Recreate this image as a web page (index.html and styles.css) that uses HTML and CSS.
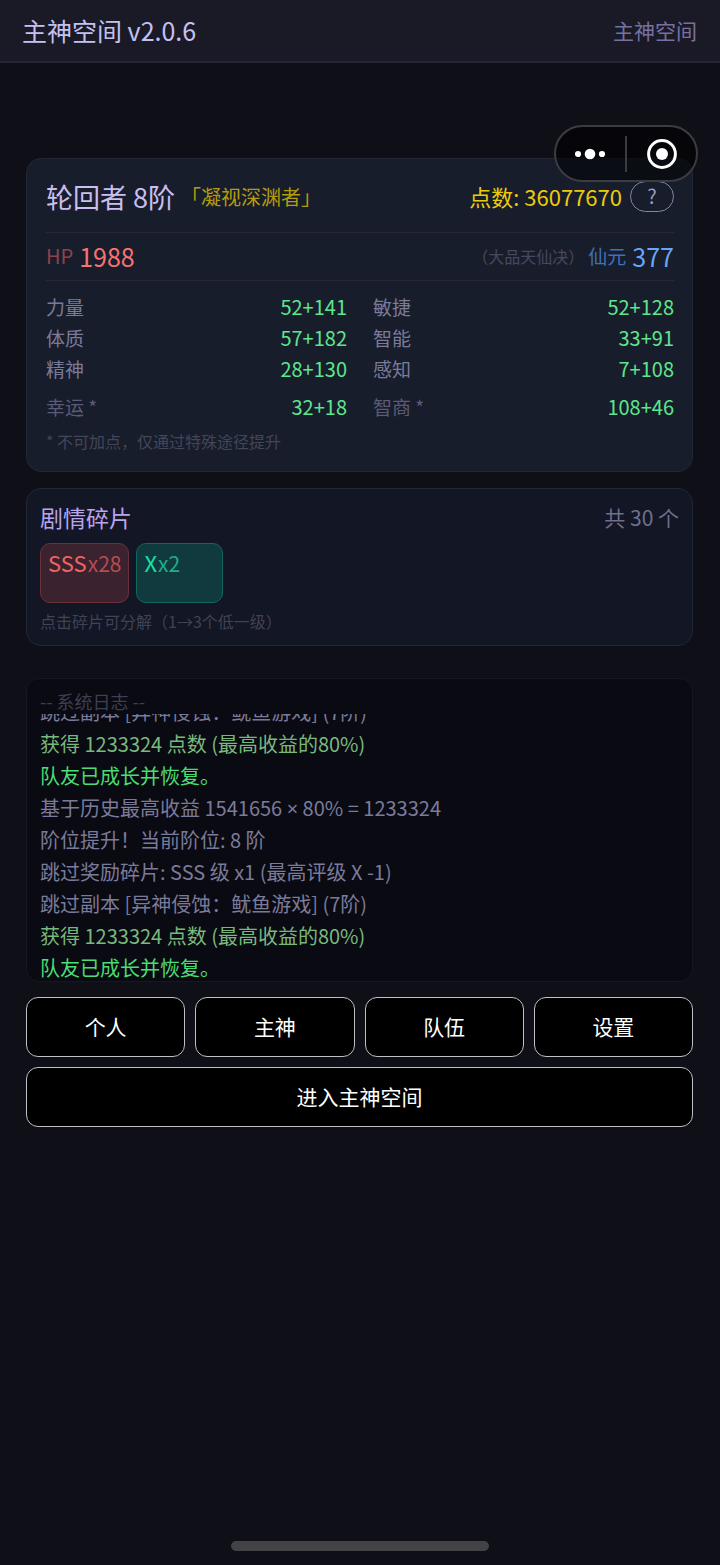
FILE: index.html
```html
<!DOCTYPE html>
<html lang="zh-CN">
<head>
<meta charset="utf-8">
<meta name="viewport" content="width=device-width, initial-scale=1">
<title>主神空间</title>
<link rel="stylesheet" href="styles.css">
</head>
<body>
<header class="topbar">
  <h1 class="topbar-title">主神空间 v2.0.6</h1>
  <span class="topbar-place">主神空间</span>
</header>

<div class="capsule">
  <button class="capsule-button" type="button" aria-label="更多">
    <svg width="32" height="12" viewBox="0 0 32 12" fill="#fff"><circle cx="3" cy="6" r="3.1"/><circle cx="15" cy="6" r="5.3"/><circle cx="27" cy="6" r="3.1"/></svg>
  </button>
  <span class="capsule-line"></span>
  <button class="capsule-button" type="button" aria-label="关闭">
    <svg width="30" height="30" viewBox="0 0 30 30"><circle cx="15" cy="15" r="13.4" fill="none" stroke="#fff" stroke-width="3"/><circle cx="15" cy="15" r="6" fill="#fff"/></svg>
  </button>
</div>

<main class="page">
  <section class="card status">
    <div class="status-head">
      <h2 class="rank">轮回者 8阶</h2>
      <span class="epithet">「凝视深渊者」</span>
      <span class="points">点数: 36077670</span>
      <button class="help" type="button">?</button>
    </div>
    <div class="vitals">
      <span class="hp-label">HP</span>
      <span class="vital-value hp-value">1988</span>
      <span class="technique">（大品天仙决）</span>
      <span class="mana-label">仙元</span>
      <span class="vital-value mana-value">377</span>
    </div>
    <dl class="stats">
      <div class="stat"><dt>力量</dt><dd>52+141</dd></div>
      <div class="stat"><dt>敏捷</dt><dd>52+128</dd></div>
      <div class="stat"><dt>体质</dt><dd>57+182</dd></div>
      <div class="stat"><dt>智能</dt><dd>33+91</dd></div>
      <div class="stat"><dt>精神</dt><dd>28+130</dd></div>
      <div class="stat"><dt>感知</dt><dd>7+108</dd></div>
    </dl>
    <dl class="stats stats-fixed">
      <div class="stat"><dt>幸运 *</dt><dd>32+18</dd></div>
      <div class="stat"><dt>智商 *</dt><dd>108+46</dd></div>
    </dl>
    <p class="note">* 不可加点，仅通过特殊途径提升</p>
  </section>

  <section class="card shards">
    <div class="shards-head">
      <h2 class="shards-title">剧情碎片</h2>
      <span class="shards-count">共 30 个</span>
    </div>
    <div class="chips">
      <button class="chip chip-sss" type="button"><span class="chip-grade">SSS</span><span class="chip-count">x28</span></button>
      <button class="chip chip-x" type="button"><span class="chip-grade">X</span><span class="chip-count">x2</span></button>
    </div>
    <p class="hint">点击碎片可分解（1→3个低一级）</p>
  </section>

  <section class="log">
    <h2 class="log-title">-- 系统日志 --</h2>
    <div class="log-view">
      <ul class="log-lines">
        <li>跳过副本 [异神侵蚀：鱿鱼游戏] (7阶)</li>
        <li class="gain">获得 1233324 点数 (最高收益的80%)</li>
        <li class="heal">队友已成长并恢复。</li>
        <li>基于历史最高收益 1541656 <span class="times">×</span> 80% = 1233324</li>
        <li>阶位提升！当前阶位: 8 阶</li>
        <li>跳过奖励碎片: SSS 级 x1 (最高评级 X -1)</li>
        <li>跳过副本 [异神侵蚀：鱿鱼游戏] (7阶)</li>
        <li class="gain">获得 1233324 点数 (最高收益的80%)</li>
        <li class="heal">队友已成长并恢复。</li>
      </ul>
    </div>
  </section>

  <nav class="actions">
    <button class="action" type="button">个人</button>
    <button class="action" type="button">主神</button>
    <button class="action" type="button">队伍</button>
    <button class="action" type="button">设置</button>
    <button class="action action-wide" type="button">进入主神空间</button>
  </nav>
</main>
<div class="home-indicator"></div>
</body>
</html>
```
FILE: styles.css
```css
* { box-sizing: border-box; }

body {
  margin: 0;
  min-height: 100vh;
  position: relative;
  background: #0f0f18;
  color: #7b7a9b;
  font-family: "Noto Sans CJK SC", sans-serif;
  font-size: 19px;
}

h1, h2, p, ul, dl, dd { margin: 0; padding: 0; font-weight: 400; }
ul { list-style: none; }
button { font: inherit; color: inherit; margin: 0; padding: 0; background: none; border: 0; cursor: pointer; }
svg { display: block; }

.topbar {
  display: flex;
  align-items: center;
  justify-content: space-between;
  height: 63px;
  padding: 0 23px 2px 22px;
  background: #1a1a27;
  border-bottom: 2px solid #262536;
}
.topbar-title { font-size: 25px; color: #c4c1f2; }
.topbar-place { font-size: 21px; color: #7671a0; }

.capsule {
  position: absolute;
  top: 125px;
  right: 22px;
  z-index: 2;
  display: flex;
  align-items: center;
  width: 144px;
  height: 57px;
  border: 2px solid #3b3b40;
  border-radius: 29px;
  background: rgba(0, 0, 0, 0.55);
}
.capsule-button { flex: 1; display: flex; justify-content: center; }
.capsule-line { width: 2px; height: 36px; background: #3b3b40; }

.page { padding: 95px 27px 0 26px; }

.card { border: 1px solid #232634; border-radius: 15px; }

.status { padding: 16px 18px 18px 19px; background: #181d2b; }
.status-head {
  display: flex;
  align-items: center;
  height: 58px;
  padding-bottom: 15px;
  border-bottom: 1px solid #252937;
}
.rank { font-size: 27px; color: #cabff0; }
.epithet { margin-left: 6px; font-size: 20px; color: #b39c10; }
.points { margin-left: auto; font-size: 22px; color: #eccb0c; }
.help {
  width: 44px;
  height: 31px;
  margin-left: 8px;
  border: 1px solid #8585a6;
  border-radius: 16px;
  font-size: 20px;
  line-height: 28px;
  color: #9d9dc0;
}

.vitals {
  display: flex;
  align-items: center;
  height: 48px;
  padding-bottom: 2px;
  border-bottom: 1px solid #252937;
}
.vital-value { margin-left: 6px; font-size: 25px; }
.hp-label { font-size: 20px; color: #8f414d; }
.hp-value { color: #f87272; }
.technique { margin-left: auto; font-size: 16px; color: #47485f; }
.mana-label { margin-left: 4px; font-size: 19px; color: #3f70b9; }
.mana-value { color: #67a6f8; }

.stats {
  display: grid;
  grid-template-columns: 1fr 1fr;
  column-gap: 26px;
  padding-top: 10px;
}
.stat { display: flex; justify-content: space-between; line-height: 31px; }
.stat dd { font-size: 20px; color: #5de68d; }
.stats-fixed { padding-top: 7px; }
.stats-fixed dt { color: #5b5b77; }
.note { margin-top: 7px; font-size: 16px; line-height: 24px; color: #434559; }

.shards { margin-top: 16px; padding: 13px 13px 12px; background: #131624; }
.shards-head { display: flex; justify-content: space-between; align-items: center; height: 30px; }
.shards-title { font-size: 23px; color: #b9a4ee; }
.shards-count { font-size: 21px; color: #706f8e; }
.chips { display: flex; gap: 7px; margin: 11px 0 6px; }
.chip {
  display: flex;
  align-items: baseline;
  align-content: flex-start;
  flex-wrap: wrap;
  gap: 1px;
  min-width: 87px;
  height: 60px;
  padding: 5px 7px;
  border: 1px solid;
  border-radius: 10px;
  font-size: 21px;
  line-height: 26px;
}
.chip-grade { font-size: 22px; }
.chip-sss { background: #3b222f; border-color: #6a303b; color: #f06464; }
.chip-sss .chip-count { color: #b44d54; }
.chip-x { background: #113a3e; border-color: #12665c; color: #16e0ac; }
.chip-x .chip-count { color: #1cae8c; }
.hint { font-size: 16px; line-height: 24px; color: #414255; }

.log {
  margin-top: 32px;
  padding: 10px 13px 0;
  background: #0a0a12;
  border: 1px solid #171722;
  border-radius: 13px;
}
.log-title { font-size: 18px; line-height: 25px; color: #3f3e52; }
.log-view { height: 267px; overflow: hidden; }
/* The view is scrolled to its latest entries, so the oldest one is cut off. */
.log-lines { margin-top: -18px; font-size: 20px; line-height: 32px; white-space: nowrap; }
.times { font-family: "Noto Sans", sans-serif; line-height: 1; }
.gain { color: #78b97d; }
.heal { color: #4bdc73; }

.actions {
  display: grid;
  grid-template-columns: repeat(4, 1fr);
  gap: 10px;
  margin-top: 15px;
}
.action {
  height: 60px;
  padding-bottom: 3px;
  background: #000;
  border: 1px solid #c0c0c4;
  border-radius: 12px;
  font-size: 21px;
  color: #fff;
}
.action-wide { grid-column: 1 / -1; }

.home-indicator {
  position: absolute;
  bottom: 14px;
  left: 50%;
  width: 258px;
  height: 10px;
  margin-left: -129px;
  border-radius: 5px;
  background: #434347;
}
```
